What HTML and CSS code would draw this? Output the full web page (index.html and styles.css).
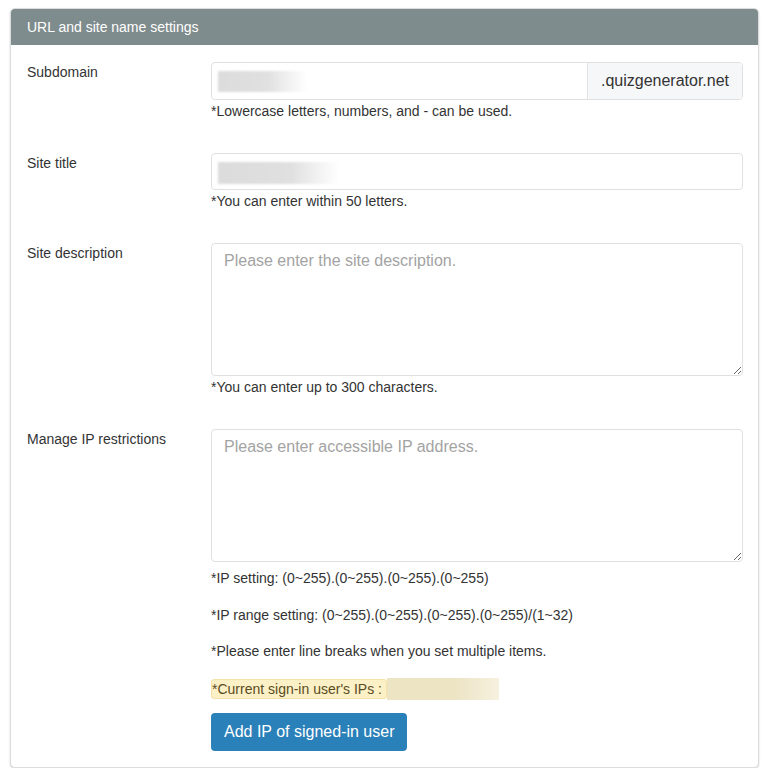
FILE: index.html
```html
<!DOCTYPE html>
<html>
<head>
<meta charset="utf-8">
<link rel="stylesheet" href="styles.css">
</head>
<body>
<div class="card">
  <div class="card-header">URL and site name settings</div>
  <div class="card-body">
    <div class="row">
      <div class="label">Subdomain</div>
      <div class="field">
        <div class="input-group">
          <div class="input-box"><span class="blur blur-sub"></span></div>
          <div class="addon">.quizgenerator.net</div>
        </div>
        <div class="help">*Lowercase letters, numbers, and - can be used.</div>
      </div>
    </div>
    <div class="row">
      <div class="label">Site title</div>
      <div class="field">
        <div class="input-box rounded"><span class="blur blur-title"></span></div>
        <div class="help">*You can enter within 50 letters.</div>
      </div>
    </div>
    <div class="row">
      <div class="label">Site description</div>
      <div class="field">
        <textarea class="textarea" placeholder="Please enter the site description."></textarea>
        <div class="help">*You can enter up to 300 characters.</div>
      </div>
    </div>
    <div class="row last">
      <div class="label">Manage IP restrictions</div>
      <div class="field">
        <textarea class="textarea" placeholder="Please enter accessible IP address."></textarea>
        <p class="note first">*IP setting: (0~255).(0~255).(0~255).(0~255)</p>
        <p class="note">*IP range setting: (0~255).(0~255).(0~255).(0~255)/(1~32)</p>
        <p class="note">*Please enter line breaks when you set multiple items.</p>
        <p class="note ip-line"><span class="hl">*Current sign-in user's IPs :</span><span class="blur blur-ip"></span></p>
        <button class="btn" type="button">Add IP of signed-in user</button>
      </div>
    </div>
  </div>
</div>
</body>
</html>
```
FILE: styles.css
```css
html, body {
  margin: 0;
  padding: 0;
  background: #ffffff;
}
body {
  padding: 8px 15px 0 10px;
  font-family: "Liberation Sans", Arial, sans-serif;
  font-size: 14px;
  color: #333333;
}
.card {
  border: 1px solid #dcdcdc;
  border-radius: 5px;
  box-shadow: 0 1px 2px rgba(0, 0, 0, 0.18);
  overflow: hidden;
  background: #fff;
}
.card-header {
  background: #7f8c8d;
  color: #ffffff;
  height: 36px;
  line-height: 36px;
  padding: 0 16px;
  font-size: 14px;
}
.card-body {
  padding: 17px 15px 16px 16px;
}
.row {
  display: grid;
  grid-template-columns: 184px 1fr;
  margin-bottom: 32px;
}
.row.last {
  margin-bottom: 0;
}
.label {
  line-height: 20px;
}
.field {
  display: flex;
  flex-direction: column;
  align-items: stretch;
}
.input-group {
  display: flex;
  height: 38px;
  box-sizing: border-box;
  border: 1px solid #e0e0e0;
  border-radius: 4px;
}
.input-box {
  flex: 1;
  box-sizing: border-box;
  height: 36px;
  padding: 8px 6px 0 6px;
  display: flex;
  align-items: flex-start;
}
.input-box.rounded {
  flex: none;
  height: 37px;
  border: 1px solid #e0e0e0;
  border-radius: 4px;
  padding-top: 8px;
}
.addon {
  width: 154px;
  background: #f6f7f9;
  border-left: 1px solid #e3e3e3;
  border-radius: 0 3px 3px 0;
  font-size: 16px;
  color: #333;
  line-height: 36px;
  text-align: center;
}
.blur {
  display: inline-block;
  filter: blur(1px);
}
.blur-sub {
  width: 89px;
  height: 21px;
  background: linear-gradient(to right, #dcdcdc 0%, #e0e0e0 55%, #ffffff 100%);
}
.blur-title {
  width: 121px;
  height: 22px;
  background: linear-gradient(to right, #dcdcdc 0%, #e0e0e0 60%, #ffffff 100%);
}
.help {
  margin-top: 1px;
  line-height: 20px;
}
.textarea {
  display: block;
  box-sizing: border-box;
  width: 100%;
  height: 133px;
  margin: 0;
  border: 1px solid #e0e0e0;
  border-radius: 4px;
  padding: 5px 12px;
  font-family: "Liberation Sans", Arial, sans-serif;
  font-size: 16px;
  line-height: 24px;
  color: #333;
  outline: none;
}
.textarea::placeholder {
  color: #a3a3a3;
}
.note {
  margin: 0 0 16.5px 0;
  line-height: 20px;
}
.note.first {
  margin-top: 6px;
}
.ip-line {
  display: flex;
  align-items: center;
  margin-bottom: 13px;
}
.hl {
  display: inline-block;
  background: #fcf0c6;
  border: 1px solid #f6e2a6;
  border-radius: 3px;
  color: #5a4c22;
  line-height: 18px;
  padding: 0 4px 0 0;
}
.blur-ip {
  width: 112px;
  height: 22px;
  filter: blur(0.6px);
  background: linear-gradient(to right, #ede4c4 0%, #ede4c4 60%, #f6f1df 100%);
}
.btn {
  align-self: flex-start;
  background: #2a80b9;
  color: #ffffff;
  border: none;
  border-radius: 4px;
  height: 38px;
  padding: 0 13px;
  font-family: "Liberation Sans", Arial, sans-serif;
  font-size: 16px;
  cursor: pointer;
}
```
